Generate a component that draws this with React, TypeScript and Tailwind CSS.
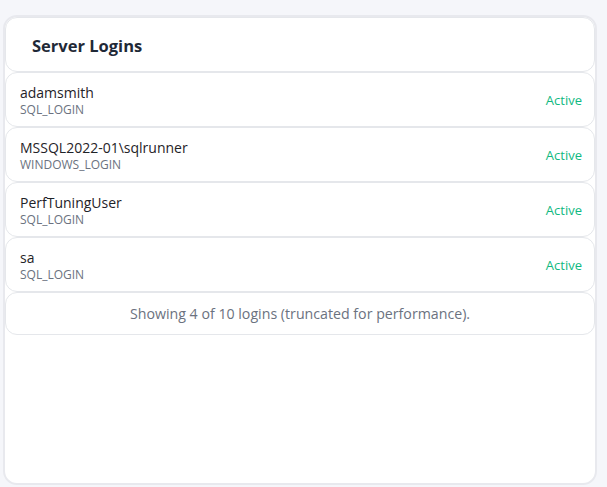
import React from 'react';

interface Login {
  name: string;
  type: string;
  status: string;
}

const logins: Login[] = [
  { name: 'adamsmith', type: 'SQL_LOGIN', status: 'Active' },
  { name: 'MSSQL2022-01\\sqlrunner', type: 'WINDOWS_LOGIN', status: 'Active' },
  { name: 'PerfTuningUser', type: 'SQL_LOGIN', status: 'Active' },
  { name: 'sa', type: 'SQL_LOGIN', status: 'Active' },
];

const LoginRow: React.FC<{ login: Login }> = ({ login }) => (
  <div className="h-[55px] flex items-center justify-between pl-[14px] pr-[12px] bg-white border border-[#e5e7eb] rounded-[12px]">
    <div className="flex flex-col pt-[2px]">
      <span className="text-[14px] leading-[18px] text-[#1f2328]">{login.name}</span>
      <span className="text-[12px] leading-[16px] text-[#6b7280]">{login.type}</span>
    </div>
    <span className="text-[13px] leading-[16px] text-[#10b981]">{login.status}</span>
  </div>
);

export default function App() {
  return (
    <div
      className="min-h-[487px] bg-[#f5f6fa] pt-[15px] pl-[3px] pr-[10px] pb-[2px]"
      style={{ fontFamily: '"Open Sans", "Noto Sans", sans-serif' }}
    >
      <div className="h-[470px] bg-white border-2 border-[#e8e9ee] rounded-[14px] flex flex-col">
        <div className="h-[55px] flex items-center pl-[26px] pt-[4px] border border-[#e5e7eb] rounded-[12px] bg-white">
          <h2 className="text-[16.5px] font-bold text-[#1f2937]">Server Logins</h2>
        </div>
        {logins.map((login, index) => (
          <LoginRow key={index} login={login} />
        ))}
        <div className="h-[43px] flex items-center justify-center bg-white border border-[#e5e7eb] rounded-[12px]">
          <span className="text-[14.2px] text-[#6b7280]">Showing 4 of 10 logins (truncated for performance).</span>
        </div>
      </div>
    </div>
  );
}
